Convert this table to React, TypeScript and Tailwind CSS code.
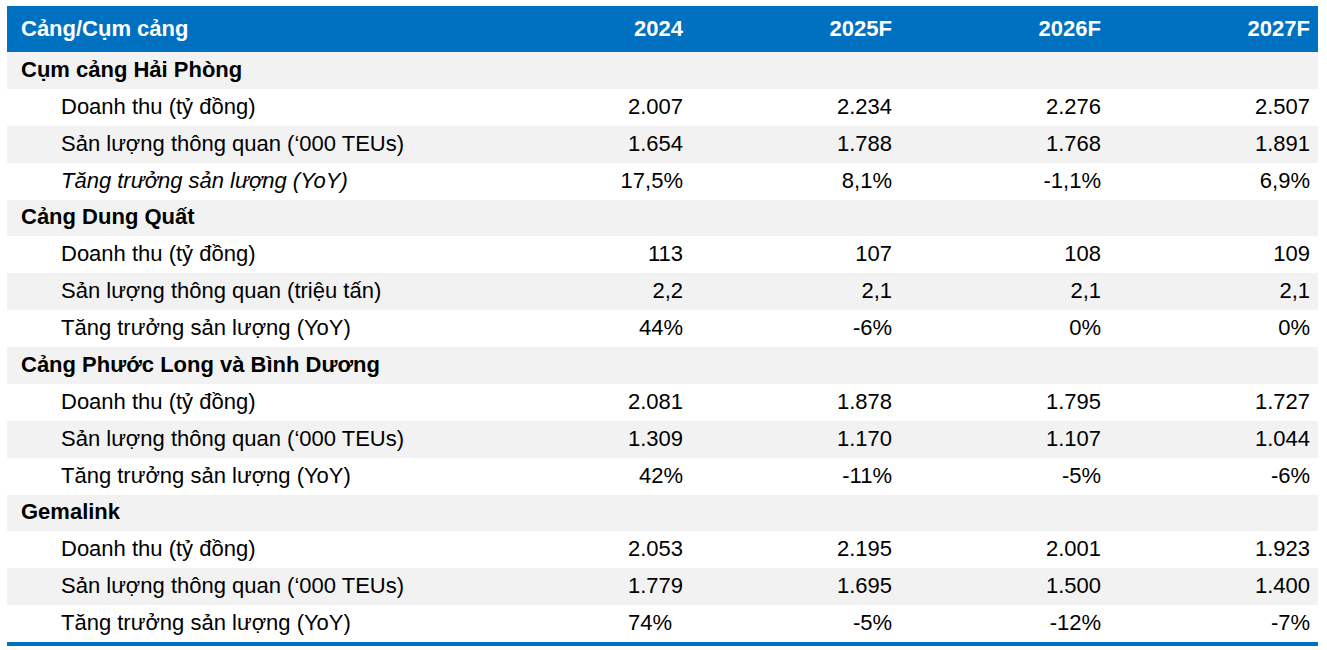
type Row = {
  label: string;
  values?: string[];
  group?: boolean;
  italic?: boolean;
  shift?: boolean;
};

const rows: Row[] = [
  { label: "Cụm cảng Hải Phòng", group: true },
  { label: "Doanh thu (tỷ đồng)", values: ["2.007", "2.234", "2.276", "2.507"] },
  { label: "Sản lượng thông quan (‘000 TEUs)", values: ["1.654", "1.788", "1.768", "1.891"] },
  { label: "Tăng trưởng sản lượng (YoY)", values: ["17,5%", "8,1%", "-1,1%", "6,9%"], italic: true },
  { label: "Cảng Dung Quất", group: true },
  { label: "Doanh thu (tỷ đồng)", values: ["113", "107", "108", "109"] },
  { label: "Sản lượng thông quan (triệu tấn)", values: ["2,2", "2,1", "2,1", "2,1"] },
  { label: "Tăng trưởng sản lượng (YoY)", values: ["44%", "-6%", "0%", "0%"] },
  { label: "Cảng Phước Long và Bình Dương", group: true },
  { label: "Doanh thu (tỷ đồng)", values: ["2.081", "1.878", "1.795", "1.727"] },
  { label: "Sản lượng thông quan (‘000 TEUs)", values: ["1.309", "1.170", "1.107", "1.044"] },
  { label: "Tăng trưởng sản lượng (YoY)", values: ["42%", "-11%", "-5%", "-6%"] },
  { label: "Gemalink", group: true },
  { label: "Doanh thu (tỷ đồng)", values: ["2.053", "2.195", "2.001", "1.923"] },
  { label: "Sản lượng thông quan (‘000 TEUs)", values: ["1.779", "1.695", "1.500", "1.400"] },
  { label: "Tăng trưởng sản lượng (YoY)", values: ["74%", "-5%", "-12%", "-7%"], shift: true },
];

const years = ["2024", "2025F", "2026F", "2027F"];

export default function App() {
  return (
    <div className="bg-white w-[1327px] h-[650px] pt-[6px] pl-[7px] font-['Liberation_Sans',Arial,sans-serif] text-[22px] text-black">
      <div className="w-[1311px]">
        <div className="grid grid-cols-[475px_209px_209px_209px_209px] h-[46px] pb-[2px] bg-[#0070c0] text-white font-bold items-center">
          <div className="pl-[14px]">Cảng/Cụm cảng</div>
          {years.map((y) => (
            <div key={y} className="text-right pr-[8px]">
              {y}
            </div>
          ))}
        </div>
        {rows.map((r, i) => (
          <div
            key={i}
            className={`grid grid-cols-[475px_209px_209px_209px_209px] h-[36.875px] pb-[2px] items-center ${
              i % 2 === 0 ? "bg-[#f2f2f2]" : "bg-white"
            }`}
          >
            {r.group ? (
              <div className="pl-[14px] font-bold">{r.label}</div>
            ) : (
              <>
                <div className={`pl-[54px] ${r.italic ? "italic" : ""}`}>{r.label}</div>
                {r.values!.map((v, j) => (
                  <div
                    key={j}
                    className={`text-right ${r.shift && j === 0 ? "pr-[19px]" : "pr-[8px]"}`}
                  >
                    {v}
                  </div>
                ))}
              </>
            )}
          </div>
        ))}
        <div className="h-[4px] bg-[#0070c0]" />
      </div>
    </div>
  );
}
